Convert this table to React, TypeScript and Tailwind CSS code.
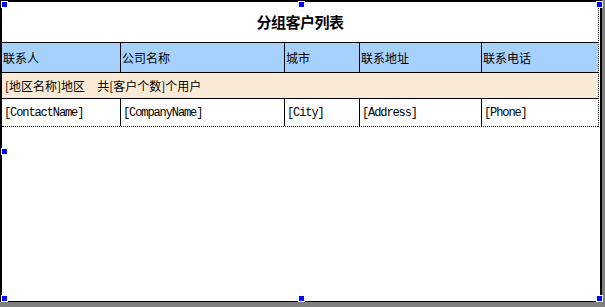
import React from 'react'

const cjk = { fontFamily: '"Noto Sans CJK SC", "Liberation Sans", sans-serif' }
const mono = { fontFamily: '"Liberation Mono", "Noto Sans CJK SC", monospace' }

const columns = [
    { title: '联系人', field: '[ContactName]', width: 'w-[118px]' },
    { title: '公司名称', field: '[CompanyName]', width: 'w-[164px] border-l border-black' },
    { title: '城市', field: '[City]', width: 'w-[75px] border-l border-black' },
    { title: '联系地址', field: '[Address]', width: 'w-[122px] border-l border-black' },
    { title: '联系电话', field: '[Phone]', width: 'flex-1 border-l border-black' },
]

// resize handles drawn over the report frame
function Handle({ className }: { className: string }) {
    return <div className={`absolute w-[7px] h-[7px] bg-[#0000ff] border border-white ${className}`} />
}

export default function App() {
    return (
        <div className="w-[605px] h-[307px] bg-[#808080] relative overflow-hidden" style={cjk}>
            <div className="w-[602px] h-[302px] bg-white border-l-2 border-t-2 border-r-2 border-b border-black">
                <div className="w-[597px] border-r border-dotted border-black">
                    <div className="h-[40px] flex items-center justify-center">
                        <span className="text-[15px] font-bold text-black tracking-[-0.5px] pt-[1px]">分组客户列表</span>
                    </div>

                    <div className="h-[31px] flex border-y border-black bg-[#a6d1fc] text-[12px] text-black">
                        {columns.map((c) => (
                            <div key={c.title} className={`${c.width} flex items-center pl-px`}>
                                {c.title}
                            </div>
                        ))}
                    </div>

                    <div className="h-[26px] flex items-center gap-[12px] border-b border-black bg-[#f9ead7] pl-[3px] text-[12px] text-black">
                        <span>[地区名称]地区</span>
                        <span>共[客户个数]个用户</span>
                    </div>

                    <div className="h-[28px] flex border-b border-dotted border-black text-[12px] text-black tracking-[-1.1px]" style={mono}>
                        {columns.map((c) => (
                            <div key={c.field} className={`${c.width} flex items-center pl-[2px]`}>
                                {c.field}
                            </div>
                        ))}
                    </div>
                </div>
            </div>

            <Handle className="left-[1px] top-[1px]" />
            <Handle className="left-[298px] top-[1px]" />
            <Handle className="left-[596px] top-[1px]" />
            <Handle className="left-[1px] top-[148px]" />
            <Handle className="left-[1px] top-[295px]" />
            <Handle className="left-[298px] top-[295px]" />
            <Handle className="left-[596px] top-[295px]" />
        </div>
    )
}
